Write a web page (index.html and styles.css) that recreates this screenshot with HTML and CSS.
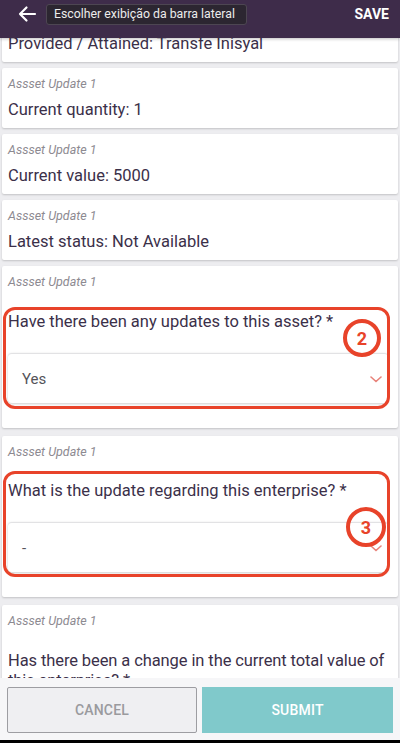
FILE: index.html
```html
<!DOCTYPE html>
<html lang="en">
<head>
<meta charset="utf-8">
<title>Asset Update</title>
<link rel="stylesheet" href="styles.css">
</head>
<body>
<div class="app">
  <header class="topbar">
    <button class="back" aria-label="Back">
      <svg width="20" height="18" viewBox="0 0 20 18"><path d="M18 9H3M9.5 2.5L3 9l6.5 6.5" fill="none" stroke="#fff" stroke-width="2.2" stroke-linecap="round" stroke-linejoin="round"/></svg>
    </button>
    <div class="tooltip">Escolher exibição da barra lateral</div>
    <span class="save">SAVE</span>
  </header>

  <main class="list">
    <div class="scroll">
      <section class="card card-first">
        <p class="value">Provided / Attained: Transfe Inisyal</p>
      </section>
      <section class="card">
        <p class="label">Assset Update 1</p>
        <p class="value">Current quantity: 1</p>
      </section>
      <section class="card">
        <p class="label">Assset Update 1</p>
        <p class="value">Current value: 5000</p>
      </section>
      <section class="card">
        <p class="label">Assset Update 1</p>
        <p class="value">Latest status: Not Available</p>
      </section>
      <section class="card card-question">
        <p class="label">Assset Update 1</p>
        <p class="question">Have there been any updates to this asset? *</p>
        <div class="select">
          <span class="select-text">Yes</span>
          <svg class="chev" width="12" height="7" viewBox="0 0 12 7"><path d="M1 1l5 4.5L11 1" fill="none" stroke="#e8837a" stroke-width="1.6" stroke-linecap="round"/></svg>
        </div>
        <div class="mark mark-one"></div>
        <div class="badge badge-two">2</div>
      </section>
      <section class="card card-question">
        <p class="label">Assset Update 1</p>
        <p class="question q-two">What is the update regarding this enterprise? *</p>
        <div class="select">
          <span class="select-text">-</span>
          <svg class="chev" width="12" height="7" viewBox="0 0 12 7"><path d="M1 1l5 4.5L11 1" fill="none" stroke="#e8837a" stroke-width="1.6" stroke-linecap="round"/></svg>
        </div>
        <div class="mark mark-two"></div>
        <div class="badge badge-three">3</div>
      </section>
      <section class="card card-question card-last">
        <p class="label">Assset Update 1</p>
        <p class="question">Has there been a change in the current total value of this enterprise? *</p>
      </section>
    </div>
  </main>

  <footer class="actions">
    <button class="btn btn-cancel">CANCEL</button>
    <button class="btn btn-submit">SUBMIT</button>
  </footer>
  <div class="edge"></div>
</div>
</body>
</html>
```

FILE: styles.css
```css
* { box-sizing: border-box; }
html, body { margin: 0; padding: 0; }
body {
  font-family: Roboto, "Noto Sans", "Liberation Sans", sans-serif;
  background: #ededf0;
  color: #3b3049;
}
.app {
  width: 400px;
  height: 743px;
  display: flex;
  flex-direction: column;
  overflow: hidden;
}
.topbar {
  position: relative;
  z-index: 3;
  flex: none;
  height: 38px;
  background: #3e2c4a;
  display: flex;
  align-items: flex-start;
  justify-content: space-between;
  padding: 5px 11px 0 17px;
  box-shadow: 0 1px 3px rgba(0,0,0,0.25);
}
.back {
  border: 0;
  background: none;
  padding: 0;
  width: 20px;
  height: 18px;
  display: flex;
}
.tooltip {
  position: absolute;
  left: 46px;
  top: 4px;
  width: 201px;
  height: 21px;
  background: #2c2631;
  border: 1px solid #4d4652;
  border-radius: 3px;
  color: #ececec;
  font-size: 12.3px;
  line-height: 19px;
  padding-left: 7px;
  white-space: nowrap;
}
.save {
  color: #fff;
  font-weight: 700;
  font-size: 14px;
  line-height: 18px;
}
.list {
  flex: 1;
  overflow: hidden;
  background: #ededf0;
}
.scroll {
  margin-top: -12px;
  padding: 0 2px;
  display: flex;
  flex-direction: column;
  gap: 6px;
}
.card {
  position: relative;
  background: #fff;
  border-radius: 2px;
  box-shadow: 0 1px 2px rgba(0,0,0,0.18);
  padding: 8px 6px;
}
.card p { margin: 0; }
.label {
  font-size: 12.5px;
  line-height: 16px;
  font-style: italic;
  color: #8d8a91;
}
.value {
  margin-top: 8px !important;
  font-size: 16.5px;
  line-height: 20px;
  color: #3b3049;
}
.card-first .value { margin-top: 0 !important; }
.card-question { padding-bottom: 25px; }
.card-question + .card-question { margin-top: 2px; }
.card-last .question { letter-spacing: -0.1px; }
.question {
  margin-top: 22px !important;
  font-size: 16.5px;
  line-height: 20px;
  color: #3b3049;
}
.q-two { margin-top: 21px !important; }
.select {
  margin: 21px 4px 0 0;
  height: 50px;
  background: #fff;
  border-top: 1px solid #e2e2e4;
  border-radius: 4px;
  box-shadow: 0 1px 3px rgba(0,0,0,0.2);
  display: flex;
  align-items: center;
  justify-content: space-between;
  padding: 0 6px 0 14px;
}
.select-text {
  font-size: 15px;
  color: #55545a;
}
.chev { margin-top: 2px; }
.mark {
  position: absolute;
  left: 1px;
  width: 387px;
  border: 3.5px solid #e8432a;
  border-radius: 12px;
}
.mark-one { top: 41px; height: 102px; }
.mark-two { top: 35px; height: 106px; }
.badge {
  position: absolute;
  width: 38px;
  height: 38px;
  border: 4px solid #e8432a;
  border-radius: 50%;
  color: #e8432a;
  font-weight: 700;
  font-size: 18px;
  display: flex;
  align-items: center;
  justify-content: center;
}
.badge-two { left: 341px; top: 53px; }
.badge-three { left: 344px; top: 71px; width: 40px; height: 40px; }
.actions {
  flex: none;
  height: 62px;
  background: #f6f6f8;
  display: flex;
  gap: 5px;
  padding: 9px 7px 0 7px;
  position: relative;
  z-index: 2;
}
.btn {
  height: 46px;
  font-family: Roboto, "Noto Sans", "Liberation Sans", sans-serif;
  font-size: 14px;
  font-weight: 500;
  letter-spacing: 0.2px;
}
.btn-cancel {
  width: 190px;
  background: #efeff2;
  border: 1px solid #9d9da2;
  border-radius: 2px;
  color: #9a9a9e;
}
.btn-submit {
  width: 191px;
  background: #80c9cb;
  border: 0;
  border-radius: 0;
  color: #fff;
}
.edge {
  flex: none;
  height: 3px;
  background: #000;
}
```
